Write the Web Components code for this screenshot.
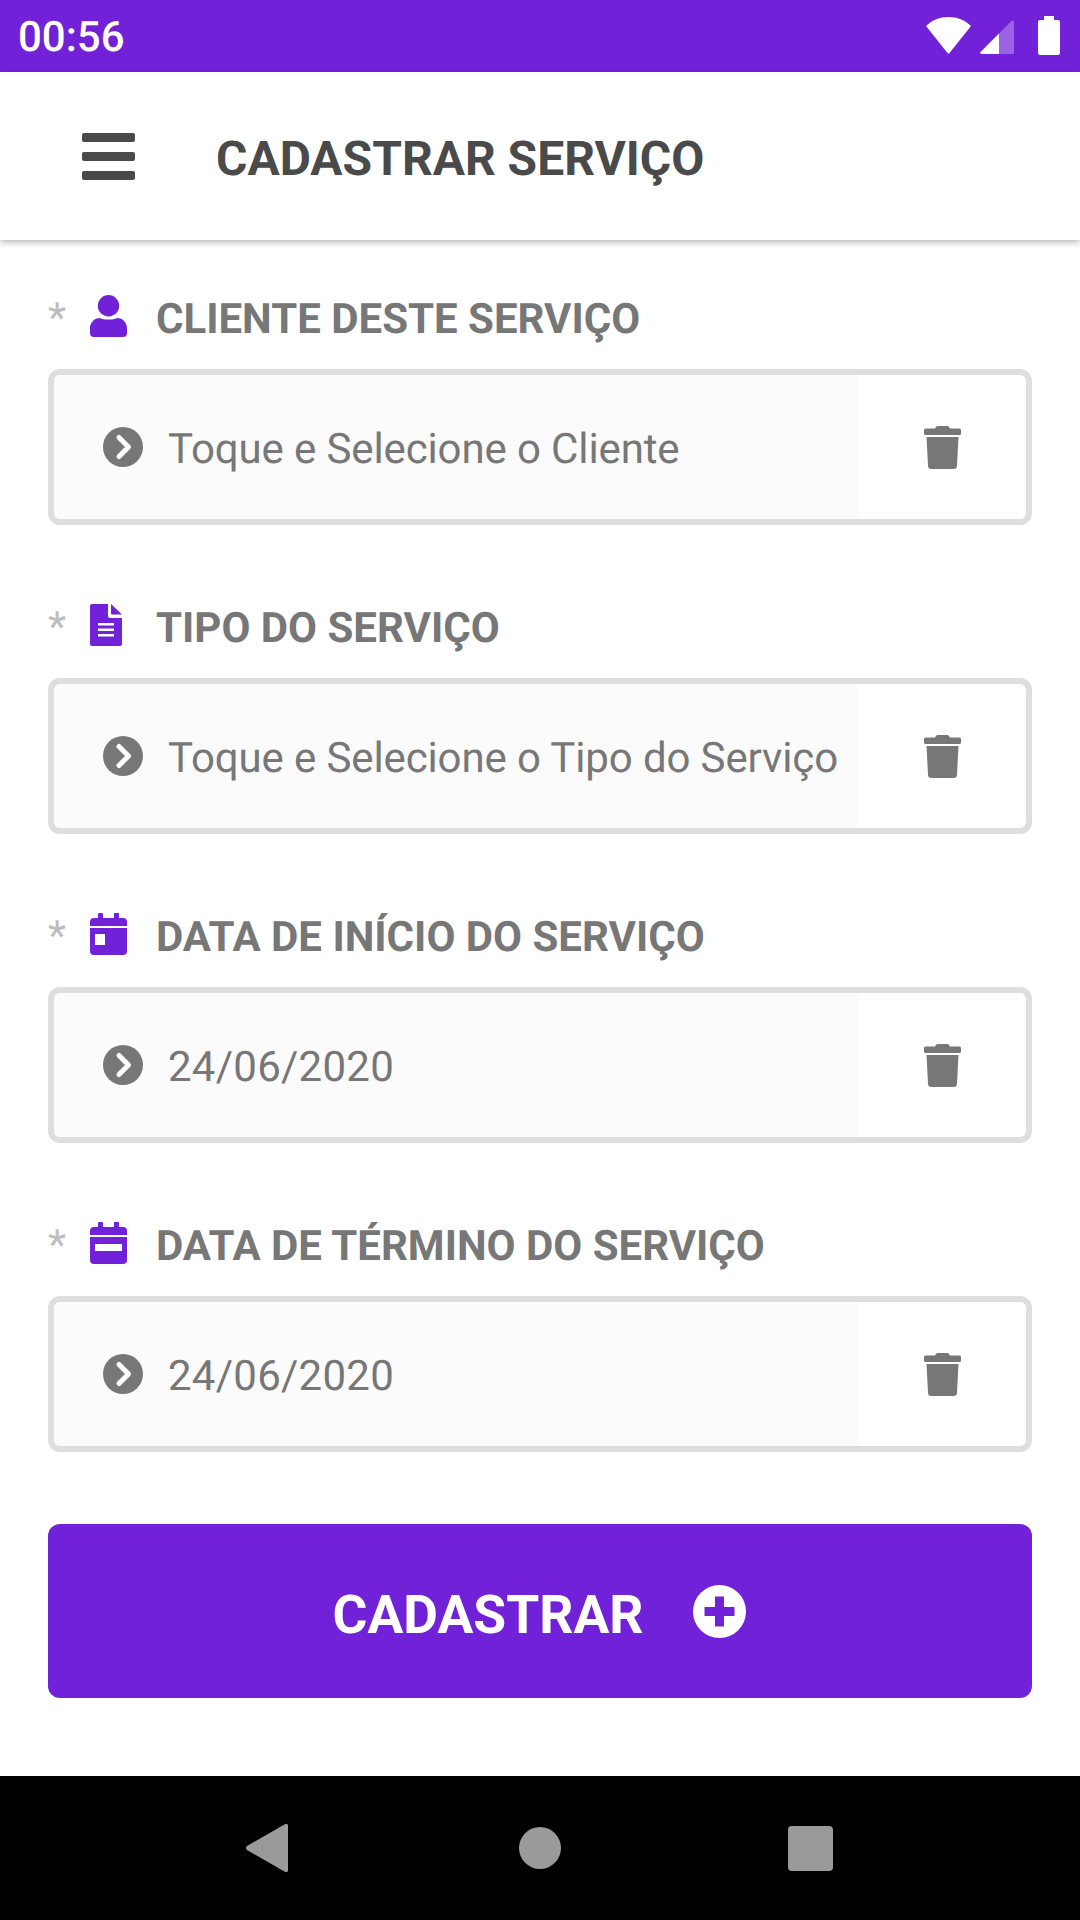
<!DOCTYPE html>
<html lang="pt">
<head>
<meta charset="utf-8">
<title>Cadastrar Serviço</title>
<style>
  html, body { margin: 0; padding: 0; }
  body {
    width: 1080px;
    height: 1920px;
    display: flex;
    flex-direction: column;
    background: #fff;
    font-family: Roboto, "Liberation Sans", sans-serif;
    text-rendering: geometricPrecision;
    overflow: hidden;
  }
</style>
</head>
<body>
<status-bar time="00:56"></status-bar>
<app-header title-text="CADASTRAR SERVIÇO"></app-header>
<service-form>
  <form-field label="CLIENTE DESTE SERVIÇO" value="Toque e Selecione o Cliente">
    <svg slot="icon" width="37" height="42" viewBox="0 0 37 42" fill="#7122d8"><circle cx="18.5" cy="10.7" r="10.7"/><path d="M10 23C13 25 24 25 27 23C33 23 37 28 37 33V38a4 4 0 0 1-4 4H4a4 4 0 0 1-4-4V33C0 28 4 23 10 23Z"/></svg>
  </form-field>
  <form-field label="TIPO DO SERVIÇO" value="Toque e Selecione o Tipo do Serviço">
    <svg slot="icon" width="32" height="42" viewBox="0 0 32 42" fill="#7122d8"><path d="M2 0H18V12a2 2 0 0 0 2 2H32V40a2 2 0 0 1-2 2H2a2 2 0 0 1-2-2V2a2 2 0 0 1 2-2Z"/><path d="M21 0L32 10.500H22a1 1 0 0 1-1-1Z"/><path d="M8 19h16v2.500H8zM8 24.500h16v2.500H8zM8 30h16v2.500H8z" fill="#fff"/></svg>
  </form-field>
  <form-field label="DATA DE INÍCIO DO SERVIÇO" value="24/06/2020" style="--track:.25px">
    <svg slot="icon" width="37" height="42" viewBox="0 0 37 42" fill="#7122d8"><path d="M10 0a2 2 0 0 1 3 1V5H24V1a2 2 0 0 1 5 0V5H33a4 4 0 0 1 4 4V13H0V9a4 4 0 0 1 4-4H8V1a2 2 0 0 1 2-1Z"/><path fill-rule="evenodd" d="M0 15H37V38a4 4 0 0 1-4 4H4a4 4 0 0 1-4-4ZM5 21V32H15V21Z"/></svg>
  </form-field>
  <form-field label="DATA DE TÉRMINO DO SERVIÇO" value="24/06/2020" style="--track:.25px">
    <svg slot="icon" width="37" height="42" viewBox="0 0 37 42" fill="#7122d8"><path d="M10 0a2 2 0 0 1 3 1V5H24V1a2 2 0 0 1 5 0V5H33a4 4 0 0 1 4 4V13H0V9a4 4 0 0 1 4-4H8V1a2 2 0 0 1 2-1Z"/><path fill-rule="evenodd" d="M0 15H37V38a4 4 0 0 1-4 4H4a4 4 0 0 1-4-4ZM5 22V29H32V22Z"/></svg>
  </form-field>
  <submit-button>CADASTRAR</submit-button>
</service-form>
<nav-bar></nav-bar>

<script>
class StatusBar extends HTMLElement {
  constructor() {
    super();
    this.shadow = this.attachShadow({ mode: "open" });
    this.shadow.innerHTML = `
<style>
  :host { display: flex; align-items: flex-start; height: 72px; background: #7122d8; color: #fff; padding: 0 20px 0 18px; flex: none; }
  .time { font: 500 42px/72px Roboto, sans-serif; flex: 1; padding-top: 2px; }
  .icons { display: flex; align-items: flex-start; height: 72px; }
  svg { display: block; }
</style>
<span class="time"></span>
<div class="icons">
  <svg width="45" height="37" viewBox="0 0 45 37" style="margin-top:17px" fill="#fff"><path d="M0 9C6 3 14 0 22.500 0S39 3 45 9L23.500 36a1.300 1.300 0 0 1-2 0Z"/></svg>
  <svg width="34" height="35" viewBox="0 0 34 35" style="margin:20px 0 0 9px"><path d="M34 2a1.500 1.500 0 0 0-2.500-1L19 13.500V34H32.500a1.500 1.500 0 0 0 1.500-1.500Z" fill="#fff" fill-opacity=".3"/><path d="M19 13.500L.5 32a1.200 1.200 0 0 0 1 2H19Z" fill="#fff"/></svg>
  <svg width="22" height="39" viewBox="0 0 22 39" style="margin:16px 0 0 24px" fill="#fff"><path d="M6 0H16V4H20a2 2 0 0 1 2 2V37a2 2 0 0 1-2 2H2a2 2 0 0 1-2-2V6a2 2 0 0 1 2-2H6Z"/></svg>
</div>`;
    this.shadow.querySelector(".time").textContent = this.getAttribute("time") || "";
  }
}
customElements.define("status-bar", StatusBar);

class AppHeader extends HTMLElement {
  constructor() {
    super();
    this.shadow = this.attachShadow({ mode: "open" });
    this.shadow.innerHTML = `
<style>
  :host { display: flex; align-items: center; height: 168px; background: #fff; flex: none; padding-left: 82px; box-shadow: 0 3px 6px rgba(0,0,0,.25); position: relative; }
  .menu { display: flex; flex-direction: column; gap: 10px; width: 53px; margin-right: 81px; }
  .menu i { display: block; height: 9px; background: #4a4a4a; border-radius: 2px; }
  h1 { margin: 5px 0 0; font: 700 48px/54px Roboto, sans-serif; color: #4a4a4a; }
</style>
<div class="menu"><i></i><i></i><i></i></div>
<h1></h1>`;
    this.shadow.querySelector("h1").textContent = this.getAttribute("title-text") || "";
  }
}
customElements.define("app-header", AppHeader);

class ServiceForm extends HTMLElement {
  constructor() {
    super();
    this.shadow = this.attachShadow({ mode: "open" });
    this.shadow.innerHTML = `
<style>
  :host { display: flex; flex-direction: column; flex: 1; gap: 75px; padding: 51px 48px 0; box-sizing: border-box; }
</style>
<slot></slot>`;
  }
}
customElements.define("service-form", ServiceForm);

class FormField extends HTMLElement {
  constructor() {
    super();
    this.shadow = this.attachShadow({ mode: "open" });
    this.shadow.innerHTML = `
<style>
  :host { display: flex; flex-direction: column; gap: 24px; }
  .head { display: flex; height: 54px; color: #777; }
  .star { width: 42px; font: 400 42px/54px Roboto, sans-serif; color: #bdbdbd; padding-top: 1px; }
  .icon { width: 37px; margin: 4px 29px 0 0; line-height: 0; }
  .label { font: 700 42px/54px Roboto, sans-serif; padding-top: 2px; }
  .box { display: flex; height: 156px; box-sizing: border-box; border: 6px solid #dedede; border-radius: 12px; overflow: hidden; background: #fff; }
  .pick { display: flex; align-items: center; gap: 25px; width: 804px; flex: none; box-sizing: border-box; padding-left: 49px; background: #fbfbfb; color: #777; font: 400 42px/54px Roboto, sans-serif; white-space: nowrap; }
  .value { margin-top: 6px; letter-spacing: var(--track, -.12px); }
  .trash { flex: 1; display: flex; align-items: center; justify-content: center; }
  svg { display: block; }
</style>
<div class="head"><span class="star">*</span><span class="icon"><slot name="icon"></slot></span><span class="label"></span></div>
<div class="box">
  <div class="pick">
    <svg width="40" height="40" viewBox="0 0 40 40"><circle cx="20" cy="20" r="20" fill="#777"/><path d="M16 10.500L25.500 20L16 29.500" fill="none" stroke="#fff" stroke-width="5" stroke-linecap="round" stroke-linejoin="round"/></svg>
    <span class="value"></span>
  </div>
  <div class="trash">
    <svg width="37" height="43" viewBox="0 0 37 43" fill="#777"><path d="M11 2.500l.8-1.300A2.500 2.500 0 0 1 14 0H23a2.500 2.500 0 0 1 2.200 1.200L26 2.500H35.500A1.500 1.500 0 0 1 37 4V7.500A1.500 1.500 0 0 1 35.500 9H1.500A1.500 1.500 0 0 1 0 7.500V4A1.500 1.500 0 0 1 1.500 2.500Z"/><path d="M2.500 11H34.500L33 39.500A3.500 3.500 0 0 1 29.500 43H7.500A3.500 3.500 0 0 1 4 39.500Z"/></svg>
  </div>
</div>`;
    this.shadow.querySelector(".label").textContent = this.getAttribute("label") || "";
    this.shadow.querySelector(".value").textContent = this.getAttribute("value") || "";
  }
}
customElements.define("form-field", FormField);

class SubmitButton extends HTMLElement {
  constructor() {
    super();
    this.shadow = this.attachShadow({ mode: "open" });
    this.shadow.innerHTML = `
<style>
  :host { display: flex; align-items: center; justify-content: center; gap: 49px; height: 174px; margin-top: -3px; padding-right: 2px; background: #7122d8; border-radius: 12px; color: #fff; font: 700 53.4px/60px Roboto, sans-serif; }
  span { margin-top: 10px; }
  svg { display: block; }
</style>
<span><slot></slot></span>
<svg width="53" height="53" viewBox="0 0 53 53"><circle cx="26.500" cy="26.500" r="26.500" fill="#fff"/><path d="M22 11.500h9V22h10.500v9H31v10.500H22V31H11.500V22H22Z" fill="#7122d8"/></svg>`;
  }
}
customElements.define("submit-button", SubmitButton);

class NavBar extends HTMLElement {
  constructor() {
    super();
    this.shadow = this.attachShadow({ mode: "open" });
    this.shadow.innerHTML = `
<style>
  :host { display: block; height: 144px; background: #000; flex: none; }
  .row { display: grid; grid-template-columns: 246px 42px 231px 42px 227px 45px; height: 144px; align-items: center; }
  svg, i { display: block; grid-column: var(--c); }
  i { background: #9a9a9a; }
</style>
<div class="row">
  <svg style="--c:2" width="42" height="48" viewBox="0 0 42 48"><path d="M38.500.5a2 2 0 0 1 3.500 1.500V46a2 2 0 0 1-3.500 1.500L1 26a2.500 2.500 0 0 1 0-4Z" fill="#9a9a9a"/></svg>
  <i style="--c:4;height:42px;border-radius:50%"></i>
  <i style="--c:6;height:45px;border-radius:4px"></i>
</div>`;
  }
}
customElements.define("nav-bar", NavBar);
</script>
</body>
</html>
